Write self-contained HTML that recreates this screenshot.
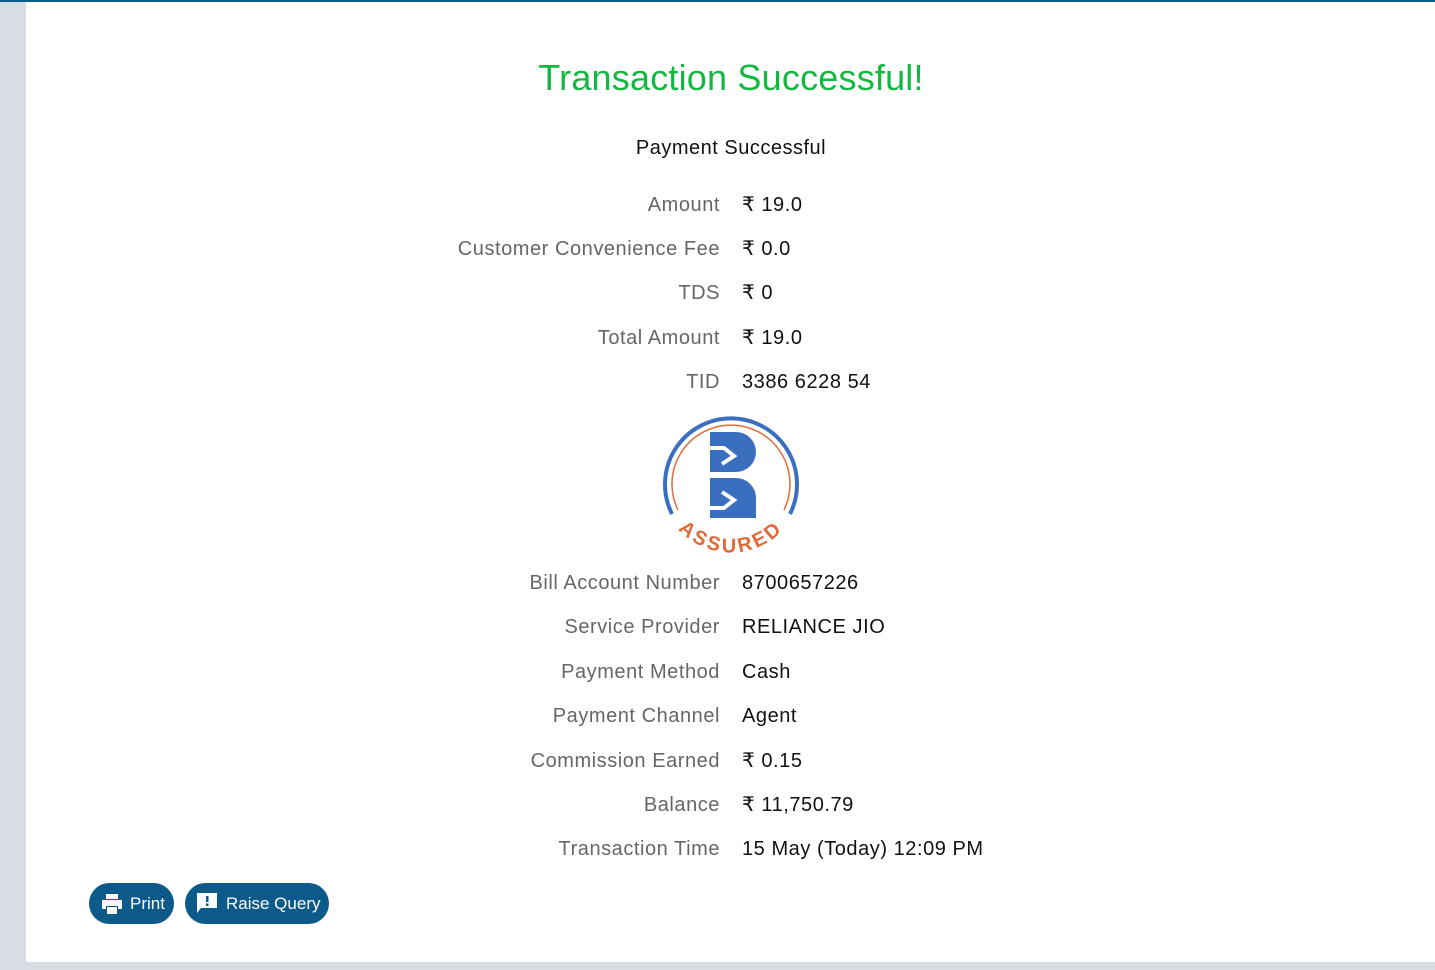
<!DOCTYPE html>
<html><head><meta charset="utf-8"><style>
body{margin:0;width:1435px;height:970px;background:#d8dce4;font-family:"Liberation Sans",sans-serif;position:relative;overflow:hidden}
.top{position:absolute;left:0;top:0;width:1435px;height:2px;background:#0b5a8a}
.panel{position:absolute;left:26px;top:2px;width:1409px;height:960px;background:#fff}
.title{position:absolute;left:0;width:1462px;top:57px;text-align:center;color:#12b83f;font-size:36px;letter-spacing:0.2px}
.sub{position:absolute;left:0;width:1462px;top:137px;text-align:center;color:#111;font-size:20px;letter-spacing:0.5px}
.row{position:absolute;left:0;width:1435px;font-size:20px;line-height:24px;letter-spacing:0.55px}
.l{position:absolute;right:715px;color:#666;white-space:nowrap}
.v{position:absolute;left:742px;color:#111;white-space:nowrap}
.btn{position:absolute;top:883px;height:41px;border-radius:21px;background:#0b5a8a;color:#fff;font-size:17px;line-height:41px;box-sizing:border-box}
</style></head><body>
<div class="top"></div>
<div class="panel"></div>
<div class="title">Transaction Successful!</div>
<div class="sub">Payment Successful</div>
<div class="row" style="top:193px"><span class="l">Amount</span><span class="v">₹ 19.0</span></div>
<div class="row" style="top:237px"><span class="l">Customer Convenience Fee</span><span class="v">₹ 0.0</span></div>
<div class="row" style="top:281px"><span class="l">TDS</span><span class="v">₹ 0</span></div>
<div class="row" style="top:326px"><span class="l">Total Amount</span><span class="v">₹ 19.0</span></div>
<div class="row" style="top:370px"><span class="l">TID</span><span class="v">3386 6228 54</span></div>
<svg style="position:absolute;left:660px;top:410px" width="142" height="146" viewBox="0 0 142 146">
<defs><path id="arc" d="M9 107 A72 72 0 0 0 133 107"/></defs>
<path d="M12 104 A66 66 0 1 1 130 104" fill="none" stroke="#3a6fc0" stroke-width="4"/>
<path d="M18 100 A59 59 0 1 1 124 100" fill="none" stroke="#e06a3a" stroke-width="1.5"/>
<path d="M50 22 H76 A20 20 0 0 1 76 62 H50 Z" fill="#3a6fc0"/>
<path d="M50 68 H76 A20 20 0 0 1 96 88 V108 H50 Z" fill="#3a6fc0"/>
<path d="M50 38 L64 38 L74 46 L62 54" fill="none" stroke="#fff" stroke-width="4"/>
<path d="M50 98 L64 98 L74 90 L62 82" fill="none" stroke="#fff" stroke-width="4"/>
<text font-family="Liberation Sans" font-weight="bold" font-size="20" fill="#e06a3a" letter-spacing="3"><textPath href="#arc" startOffset="50%" text-anchor="middle">ASSURED</textPath></text>
</svg>
<div class="row" style="top:571px"><span class="l">Bill Account Number</span><span class="v">8700657226</span></div>
<div class="row" style="top:615px"><span class="l">Service Provider</span><span class="v">RELIANCE JIO</span></div>
<div class="row" style="top:660px"><span class="l">Payment Method</span><span class="v">Cash</span></div>
<div class="row" style="top:704px"><span class="l">Payment Channel</span><span class="v">Agent</span></div>
<div class="row" style="top:749px"><span class="l">Commission Earned</span><span class="v">₹ 0.15</span></div>
<div class="row" style="top:793px"><span class="l">Balance</span><span class="v">₹ 11,750.79</span></div>
<div class="row" style="top:837px"><span class="l">Transaction Time</span><span class="v">15 May (Today) 12:09 PM</span></div>
<div class="btn" style="left:89px;width:85px;padding-left:41px">Print
<svg style="position:absolute;left:12px;top:11px" width="22" height="20" viewBox="0 0 22 20"><path d="M5 0H17V5H5Z M1 6H21V15H17V12H5V15H1Z M6 13H16V20H6Z" fill="#fff"/></svg></div>
<div class="btn" style="left:185px;width:144px;padding-left:41px">Raise Query
<svg style="position:absolute;left:11px;top:9px" width="22" height="22" viewBox="0 0 22 22"><path d="M1 1H21V16H5L1 21Z" fill="#fff"/><rect x="10" y="4" width="2.5" height="6" fill="#0b5a8a"/><rect x="10" y="11.5" width="2.5" height="2.5" fill="#0b5a8a"/></svg></div>
</body></html>
